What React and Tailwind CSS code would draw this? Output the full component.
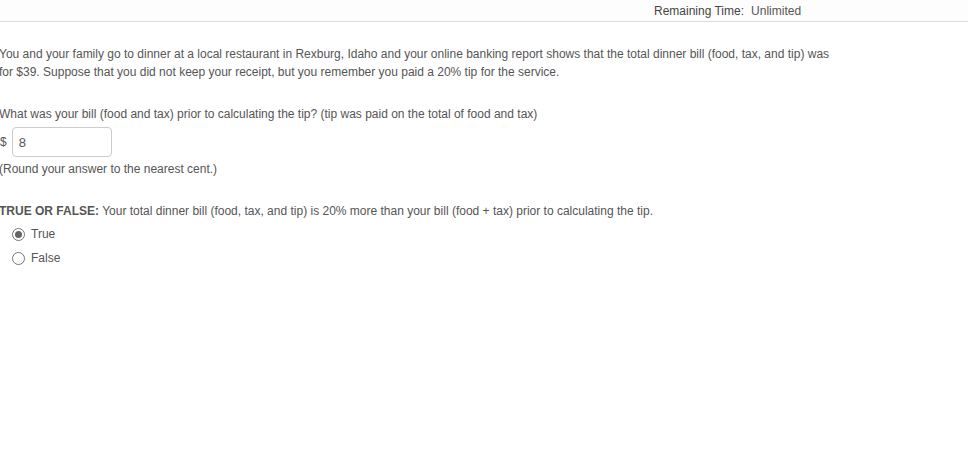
export default function App() {
  return (
    <div className="min-h-[451px] bg-white text-[12px] leading-[18px] text-[#555]" style={{ fontFamily: '"Liberation Sans", Arial, sans-serif' }}>
      <div className="flex h-[22px] items-center border-b border-[#dcdcdc] bg-[#fdfdfd] pl-[654px]">
        <span className="text-[#444]">Remaining Time:</span>
        <span className="ml-[7px]">Unlimited</span>
      </div>

      <div className="ml-[-1px] pt-[23px] pr-[130px]">
        <p>
          You and your family go to dinner at a local restaurant in Rexburg, Idaho and your online banking report shows that the total dinner bill (food, tax, and tip) was for $39. Suppose that you did not keep your receipt, but you remember you paid a 20% tip for the service.
        </p>

        <p className="mt-[24px]">
          What was your bill (food and tax) prior to calculating the tip? (tip was paid on the total of food and tax)
        </p>
        <div className="mt-[4px] flex items-center">
          <span className="ml-[1px]">$</span>
          <input
            type="text"
            defaultValue="8"
            className="ml-[5px] h-[30px] w-[100px] rounded-[4px] border border-[#ccc] px-[6px] text-[13px] text-[#555] outline-none"
          />
        </div>
        <p className="mt-[3px]">(Round your answer to the nearest cent.)</p>

        <p className="mt-[24px]">
          <span className="font-bold">TRUE OR FALSE:</span> Your total dinner bill (food, tax, and tip) is 20% more than your bill (food + tax) prior to calculating the tip.
        </p>
        <div className="mt-[5px] flex flex-col gap-[6px] pl-[13px]">
          <label className="flex items-center gap-[6px]">
            <span className="flex h-[13px] w-[13px] items-center justify-center rounded-full border border-[#777] bg-white">
              <span className="h-[7px] w-[7px] rounded-full bg-[#666]" />
            </span>
            <span>True</span>
          </label>
          <label className="flex items-center gap-[6px]">
            <span className="h-[13px] w-[13px] rounded-full border border-[#777] bg-white" />
            <span>False</span>
          </label>
        </div>
      </div>
    </div>
  )
}
